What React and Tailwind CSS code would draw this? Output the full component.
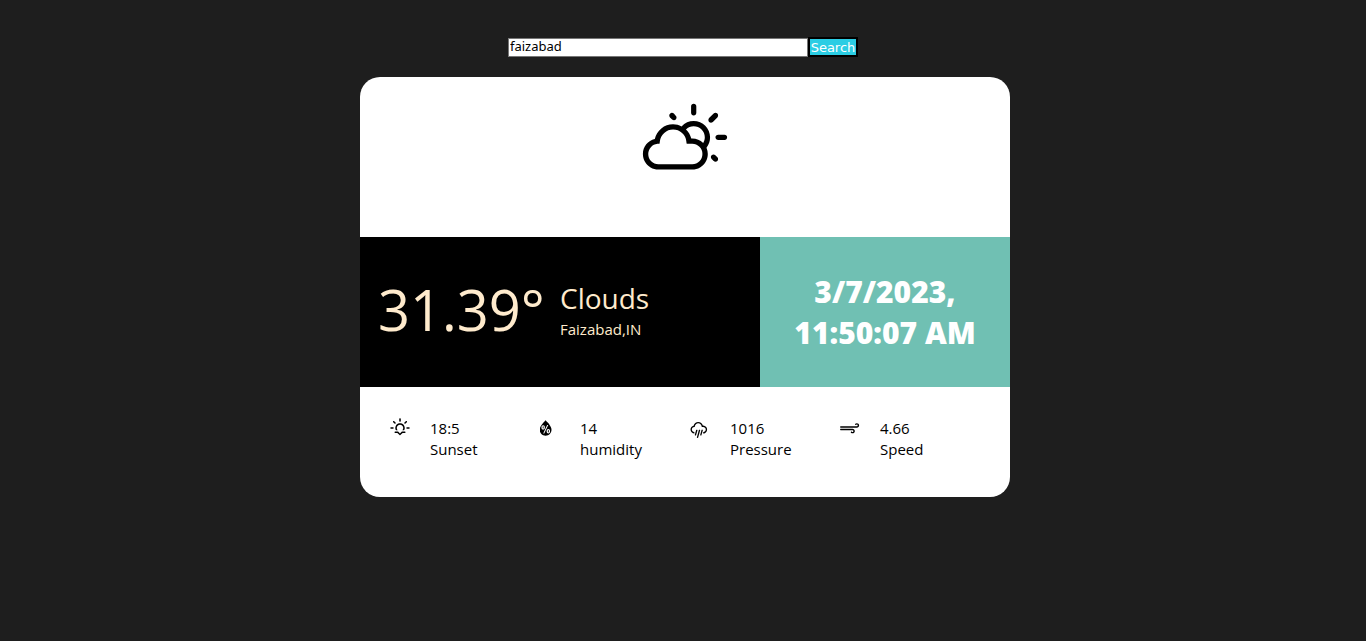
import { useState } from "react";
import { WiDayCloudy, WiSunset, WiHumidity, WiRain, WiStrongWind } from "react-icons/wi";

// Each viewBox trims the glyph's own left and top padding so the icons share an edge.
const stats = [
  { icon: WiSunset, viewBox: "2.5 3 30 30", value: "18:5", label: "Sunset" },
  { icon: WiHumidity, viewBox: "8 2.5 30 30", value: "14", label: "humidity" },
  { icon: WiRain, viewBox: "4 2.5 30 30", value: "1016", label: "Pressure" },
  { icon: WiStrongWind, viewBox: "3 2.5 30 30", value: "4.66", label: "Speed" },
];

function SearchBar() {
  const [city, setCity] = useState("faizabad");
  return (
    <form
      className="flex w-full max-w-[350px] items-center"
      onSubmit={(event) => event.preventDefault()}
    >
      <input
        type="search"
        aria-label="City"
        value={city}
        onChange={(event) => setCity(event.target.value)}
        className="h-[19px] min-w-0 flex-1 appearance-none border border-[#767676] bg-white px-px font-['Noto_Sans',sans-serif] text-[13px] text-black outline-none"
      />
      <button
        type="submit"
        className="h-5 w-[50px] border-2 border-black bg-[#2bcde4] text-center font-['DejaVu_Sans',sans-serif] text-[13px] leading-[18px] text-white"
      >
        Search
      </button>
    </form>
  );
}

function Stat({ icon: Icon, viewBox, value, label }) {
  return (
    <div className="flex w-[150px] shrink-0">
      <div className="w-10">
        <Icon className="size-6" viewBox={viewBox} aria-hidden="true" />
      </div>
      <p className="text-[15px] leading-[21px]">
        {value}
        <br />
        {label}
      </p>
    </div>
  );
}

export default function App() {
  return (
    <div className="flex min-h-screen flex-col items-center bg-[#1e1e1e] px-4 pt-[37px] font-['Open_Sans','Noto_Sans',sans-serif]">
      <SearchBar />
      <main className="mt-5 ml-1 w-full max-w-[650px] overflow-hidden rounded-[20px] bg-white text-black">
        <div className="flex h-40 justify-center pt-6">
          <WiDayCloudy className="size-[94px]" aria-hidden="true" />
        </div>
        <div className="flex h-[150px]">
          <section className="flex flex-1 items-center bg-black pb-[6px] pl-[18px] text-[#ffebcd]">
            <div className="w-[182px] text-[56px] leading-[80px]">31.39°</div>
            <div>
              <h1 className="text-[28px] leading-10">Clouds</h1>
              <p className="text-[15px] leading-[22px]">Faizabad,IN</p>
            </div>
          </section>
          <time className="flex w-[250px] items-center justify-center bg-[#70c0b3] px-5 text-center text-[30px] leading-[41px] font-extrabold text-white">
            3/7/2023, 11:50:07 AM
          </time>
        </div>
        <div className="flex h-[110px] px-[30px] pt-[31px]">
          {stats.map((stat) => (
            <Stat key={stat.label} {...stat} />
          ))}
        </div>
      </main>
    </div>
  );
}
